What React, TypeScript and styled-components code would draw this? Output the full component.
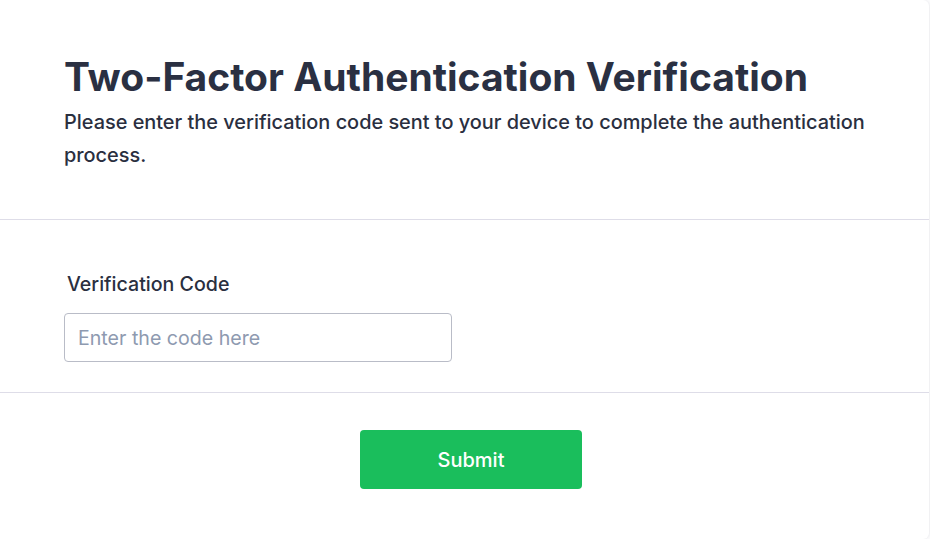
import styled, { createGlobalStyle } from 'styled-components';

const Global = createGlobalStyle`
  html, body { margin: 0; padding: 0; background: #fbfbfc; }
  body { font-family: Inter, "Noto Sans", sans-serif; color: #2a2f3f; }
`;

const Card = styled.div`
  width: 929px;
  min-height: 539px;
  background: #ffffff;
  border-radius: 0 6px 6px 0;
  box-shadow: 1px 0 2px rgba(30, 30, 60, 0.06);
  display: flex;
  flex-direction: column;
`;

const Section = styled.div<{ $top: number; $bottom: number; $center?: boolean }>`
  padding: ${p => p.$top}px 64px ${p => p.$bottom}px;
  display: flex;
  flex-direction: column;
  align-items: ${p => (p.$center ? 'center' : 'flex-start')};
  & + & { border-top: 1px solid #dedde8; }
`;

const Title = styled.h1`
  margin: 0;
  font-size: 39px;
  line-height: 46px;
  font-weight: 700;
  color: #2a3042;
`;

const Lead = styled.p`
  margin: 6px 0 0;
  font-size: 19.9px;
  line-height: 33px;
  font-weight: 500;
  color: #2a2f3f;
`;

const Label = styled.label`
  font-size: 19.6px;
  line-height: 26px;
  font-weight: 500;
  color: #2a2f3f;
  padding-left: 3px;
  margin-bottom: 16px;
`;

const Input = styled.input`
  box-sizing: border-box;
  width: 388px;
  height: 49px;
  border: 1px solid #b9bcc7;
  border-radius: 4px;
  padding: 0 13px;
  font-family: Inter, "Noto Sans", sans-serif;
  font-size: 19.6px;
  color: #2a2f3f;
  outline: none;
  &::placeholder { color: #8e9ab0; }
`;

const Button = styled.button`
  width: 222px;
  height: 59px;
  margin-left: 13px;
  border: none;
  border-radius: 4px;
  background: #1abe5c;
  color: #ffffff;
  font-family: Inter, "Noto Sans", sans-serif;
  font-size: 20px;
  font-weight: 500;
  cursor: pointer;
`;

export default function App() {
  return (
    <>
      <Global />
      <Card>
        <Section $top={54} $bottom={47}>
          <Title>Two-Factor Authentication Verification</Title>
          <Lead>
            Please enter the verification code sent to your device to complete the authentication process.
          </Lead>
        </Section>
        <Section $top={51} $bottom={30}>
          <Label htmlFor="code">Verification Code</Label>
          <Input id="code" placeholder="Enter the code here" />
        </Section>
        <Section $top={37} $bottom={50} $center>
          <Button>Submit</Button>
        </Section>
      </Card>
    </>
  );
}
